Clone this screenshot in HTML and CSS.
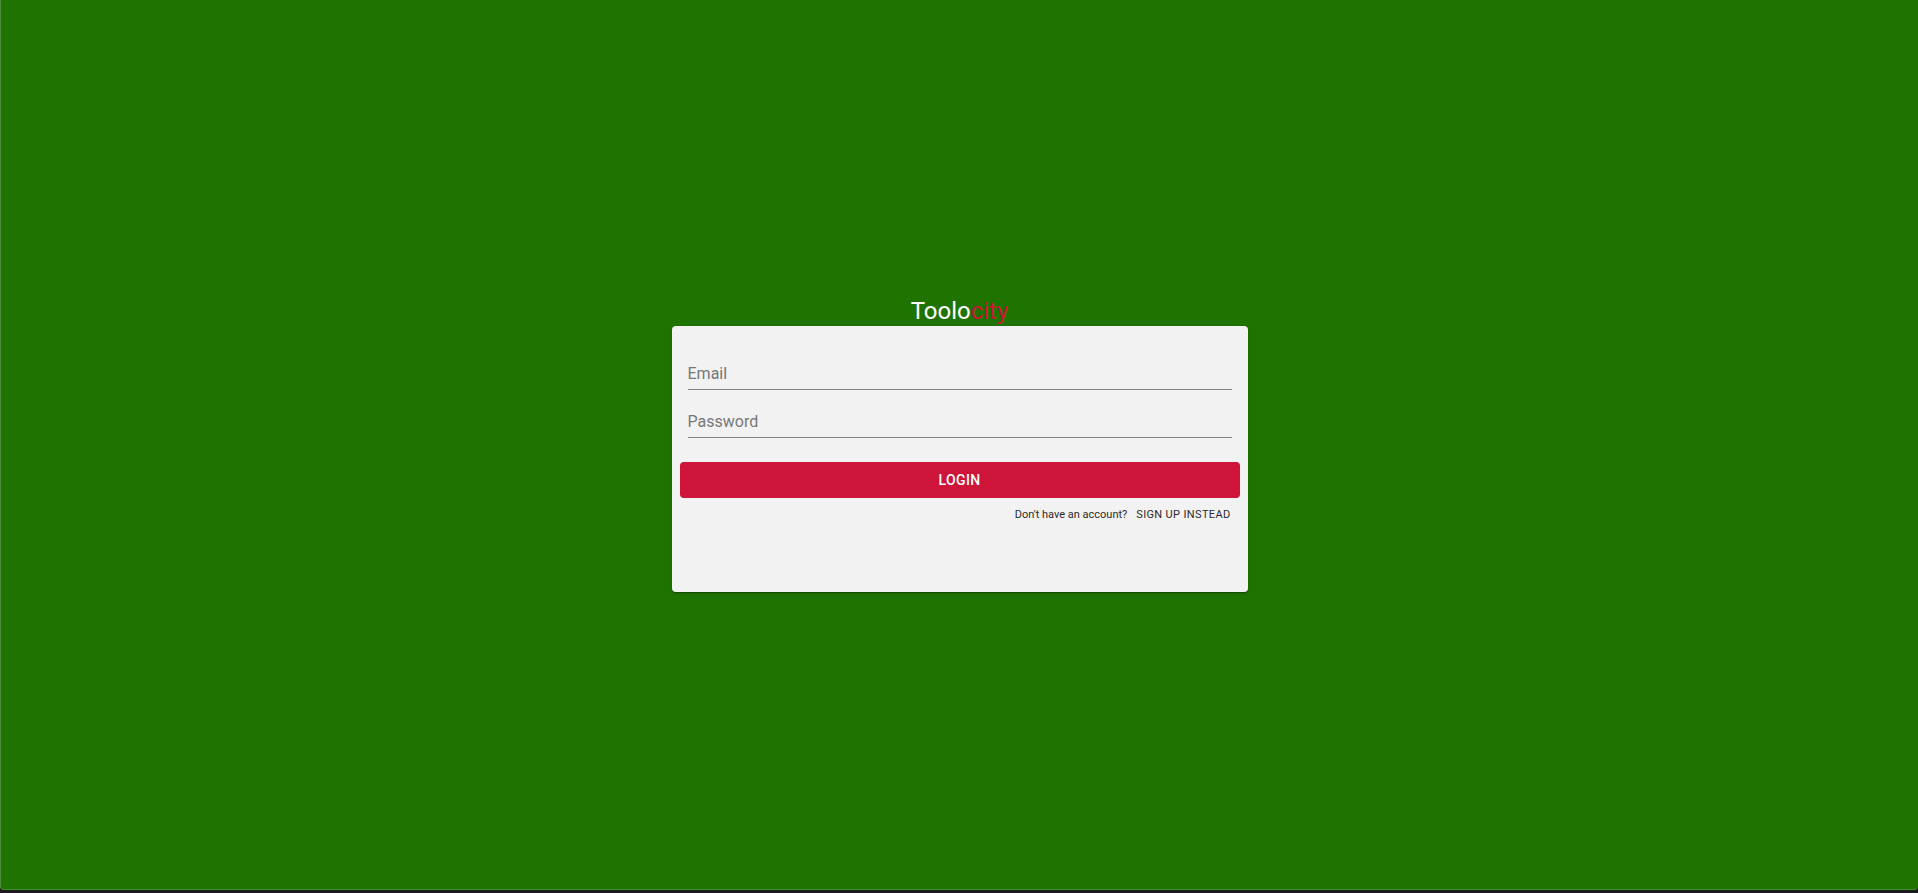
FILE: index.html
```html
<!DOCTYPE html>
<html lang="en">
<head>
<meta charset="utf-8">
<title>Toolocity</title>
<link rel="stylesheet" href="styles.css">
</head>
<body>
<main class="screen">
  <div class="login">
    <h1 class="brand">Toolo<span class="brand-accent">city</span></h1>
    <form class="card">
      <label class="field">
        <input class="field-input" type="email" placeholder="Email">
      </label>
      <label class="field">
        <input class="field-input" type="password" placeholder="Password">
      </label>
      <button class="btn-login" type="button">Login</button>
      <div class="signup-row">
        <span class="signup-text">Don't have an account?</span>
        <button class="btn-signup" type="button">Sign up instead</button>
      </div>
    </form>
  </div>
</main>
</body>
</html>
```

FILE: styles.css
```css
* { box-sizing: border-box; }

html, body {
  margin: 0;
  padding: 0;
  height: 100%;
}

body {
  background: #1c1c1e;
  font-family: Roboto, "Liberation Sans", sans-serif;
  display: flex;
  flex-direction: column;
}

.screen {
  height: 890px;
  flex: none;
  background: #1f7300;
  border-left: 1px solid #4c8c3a;
  border-bottom: 1px solid #3f8a2a;
  border-radius: 0 0 4px 4px;
  display: flex;
  align-items: center;
  justify-content: center;
  padding-bottom: 3px;
}

.login {
  width: 576px;
  display: flex;
  flex-direction: column;
  align-items: stretch;
}

.brand {
  margin: 0;
  height: 32px;
  font-size: 24px;
  line-height: 34px;
  font-weight: 400;
  color: #ffffff;
  text-align: center;
  letter-spacing: 0;
}

.brand-accent { color: #ce1438; }

.card {
  height: 266px;
  margin: 0;
  background: #f2f2f2;
  border-radius: 4px;
  box-shadow: 0 2px 1px -1px rgba(0,0,0,0.2), 0 1px 1px 0 rgba(0,0,0,0.14), 0 1px 3px 0 rgba(0,0,0,0.12);
  padding: 16px 8px 0;
  display: flex;
  flex-direction: column;
}

.field {
  display: block;
  margin: 0 8px;
  padding-top: 16px;
  border-bottom: 1px solid #858585;
}

.field-input {
  display: block;
  width: 100%;
  height: 31px;
  border: 0;
  outline: 0;
  background: transparent;
  padding: 6px 0 6px;
  font-family: Roboto, "Liberation Sans", sans-serif;
  font-size: 16px;
  line-height: 19px;
  color: #333;
}

.field-input::placeholder {
  color: #777777;
  opacity: 1;
}

.btn-login {
  margin-top: 24px;
  height: 36px;
  border: 0;
  border-radius: 4px;
  background: #ce1438;
  color: #ffffff;
  font-family: Roboto, "Liberation Sans", sans-serif;
  font-size: 14px;
  font-weight: 500;
  letter-spacing: 0.4px;
  text-transform: uppercase;
  padding: 0 16px;
}

.signup-row {
  display: flex;
  justify-content: flex-end;
  align-items: center;
  gap: 9px;
  padding: 9px 9px 0 0;
  font-size: 11px;
  color: #2a2a2a;
}

.signup-text {
  line-height: 16px;
}

.btn-signup {
  border: 0;
  background: transparent;
  padding: 0;
  font-family: Roboto, "Liberation Sans", sans-serif;
  font-size: 11px;
  line-height: 16px;
  letter-spacing: 0.35px;
  color: #2a2a2a;
  text-transform: uppercase;
}
```
